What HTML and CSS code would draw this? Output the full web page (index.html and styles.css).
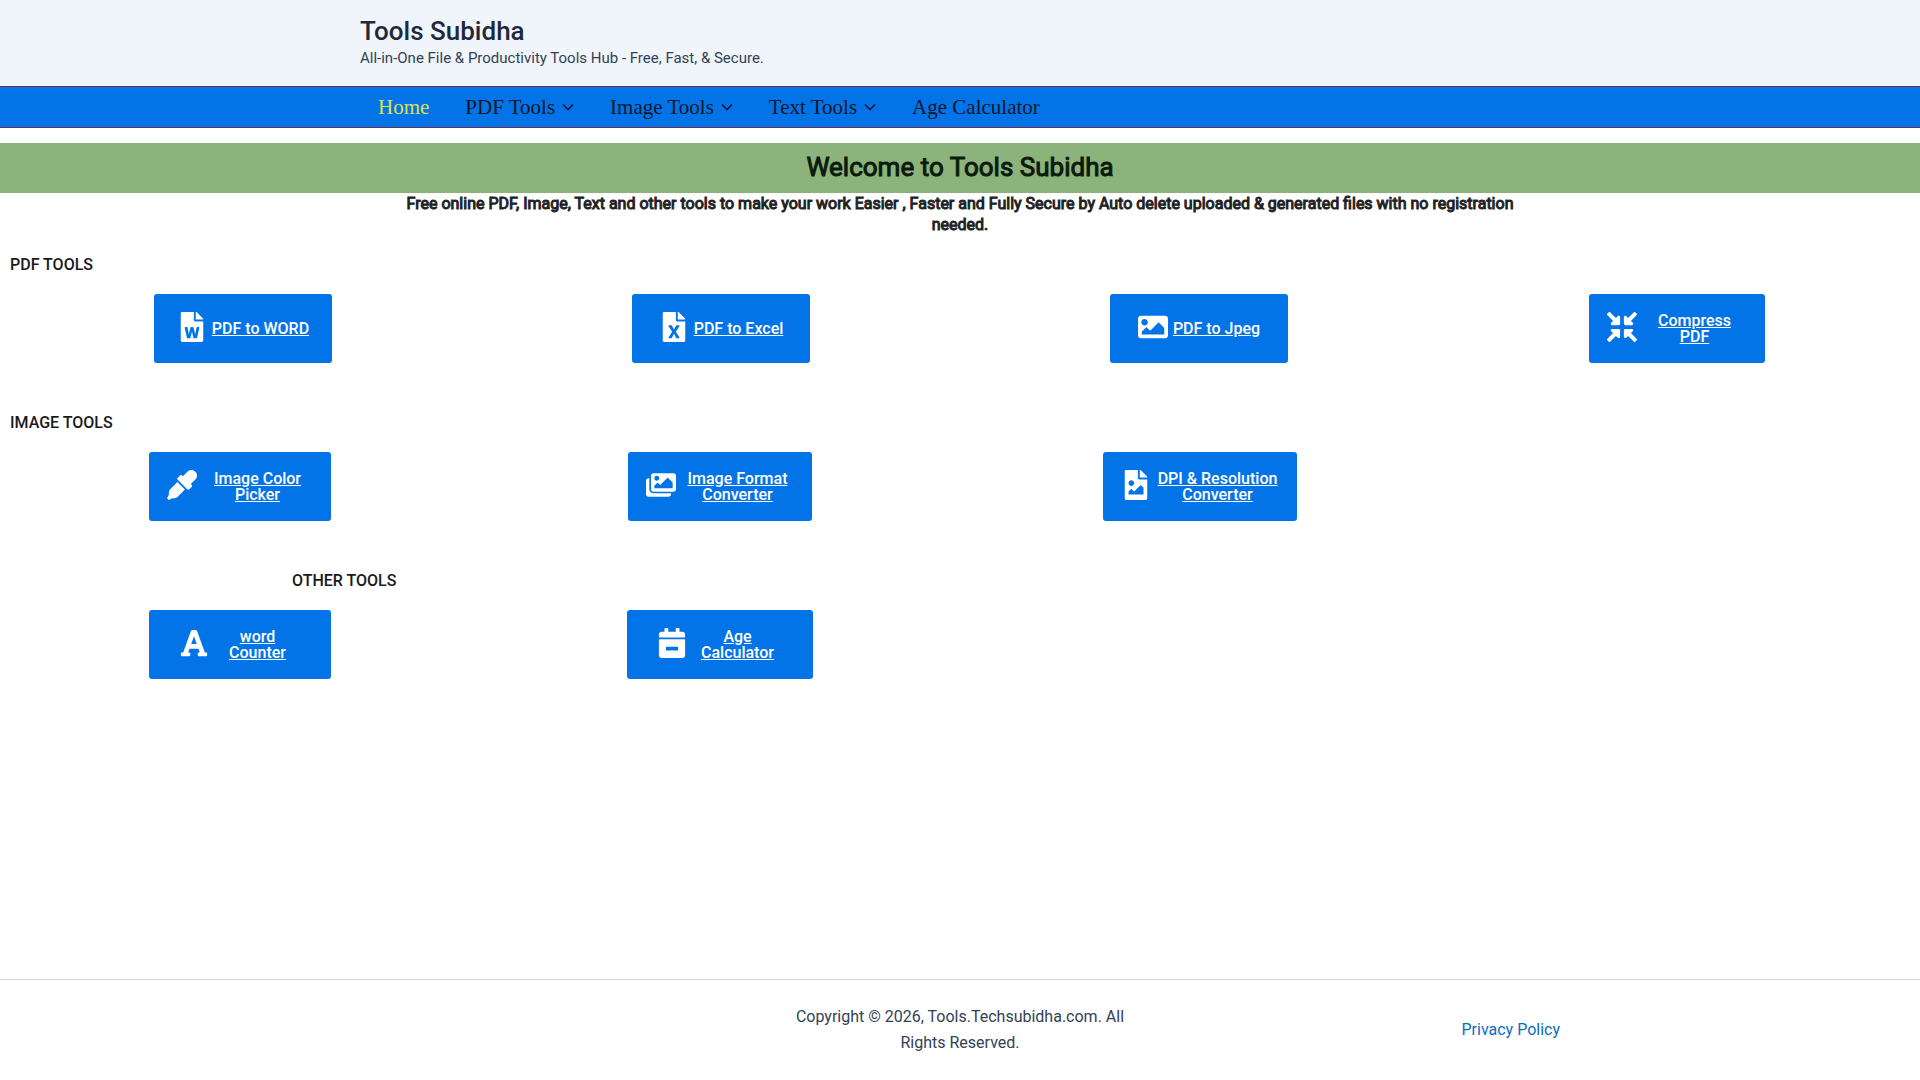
FILE: index.html
```html
<!DOCTYPE html>
<html lang="en">
<head>
  <meta charset="UTF-8" />
  <meta name="viewport" content="width=device-width, initial-scale=1.0" />
  <title>Tools Subidha</title>
  <link rel="stylesheet" href="styles.css">
</head>
<body>
  <header class="site-header">
    <div class="container">
      <a class="site-title" href="#">Tools Subidha</a>
      <p class="site-tagline">All-in-One File &amp; Productivity Tools Hub - Free, Fast, &amp; Secure.</p>
    </div>
  </header>
  <nav class="main-nav">
    <ul class="container menu">
      <li><a class="active" href="#">Home</a></li>
      <li><a href="#">PDF Tools <svg class="chevron" viewBox="0 0 12 12"><path d="M1 3.500 6 8.500l5-5"/></svg></a></li>
      <li><a href="#">Image Tools <svg class="chevron" viewBox="0 0 12 12"><path d="M1 3.500 6 8.500l5-5"/></svg></a></li>
      <li><a href="#">Text Tools <svg class="chevron" viewBox="0 0 12 12"><path d="M1 3.500 6 8.500l5-5"/></svg></a></li>
      <li><a href="#">Age Calculator</a></li>
    </ul>
  </nav>
  <main>
    <h1 class="welcome">Welcome to Tools Subidha</h1>
    <p class="intro">Free online PDF, Image, Text and other tools to make your work Easier , Faster and Fully Secure by Auto delete uploaded &amp; generated files with no registration needed.</p>

    <section class="tools">
      <h2>PDF TOOLS</h2>
      <div class="tool-row inset">
        <a class="tool-btn" href="#">
          <svg class="icon" viewBox="0 0 384 512"><path d="M224 136V0H24C10.700 0 0 10.700 0 24v464c0 13.300 10.700 24 24 24h336c13.300 0 24-10.700 24-24V160H248c-13.200 0-24-10.800-24-24zm57.100 120H305c7.700 0 13.400 7.100 11.700 14.700l-38 168c-1.200 5.500-6.100 9.300-11.700 9.300h-38c-5.500 0-10.300-3.800-11.600-9.100-25.800-103.500-20.800-81.200-25.600-110.500h-.5c-1.100 14.300-2.400 17.400-25.600 110.500-1.300 5.300-6.100 9.100-11.600 9.100H117c-5.600 0-10.500-3.900-11.700-9.400l-37.800-168c-1.700-7.500 4-14.600 11.700-14.600h24.500c5.700 0 10.700 4 11.800 9.700 15.600 78 20.100 109.500 21 122.200 1.600-10.200 7.300-32.700 29.400-122.700 1.300-5.400 6.100-9.100 11.700-9.100h29.100c5.600 0 10.400 3.800 11.700 9.200 24 100.400 28.800 124 29.600 129.400-.2-11.200-2.600-17.800 21.600-129.200 1-5.600 5.900-9.500 11.500-9.500zM384 121.900v6.100H256V0h6.100c6.400 0 12.500 2.500 17 7l97.900 98c4.500 4.500 7 10.600 7 16.900z"/></svg>
          <span>PDF to WORD</span>
        </a>
        <a class="tool-btn" href="#">
          <svg class="icon" viewBox="0 0 384 512"><path d="M224 136V0H24C10.700 0 0 10.700 0 24v464c0 13.300 10.700 24 24 24h336c13.300 0 24-10.700 24-24V160H248c-13.200 0-24-10.800-24-24zm60.100 106.500L224 336l60.100 93.500c5.100 8-.6 18.500-10.100 18.500h-34.900c-4.400 0-8.500-2.400-10.600-6.300C208.900 405.500 192 373 192 373c-6.400 14.800-10 20-36.600 68.800-2.100 3.900-6.100 6.300-10.500 6.300H110c-9.500 0-15.200-10.500-10.100-18.500l60.300-93.500-60.300-93.500c-5.200-8 .6-18.500 10.100-18.500h34.800c4.400 0 8.500 2.400 10.600 6.300 26.100 48.800 20 33.600 36.600 68.500 0 0 6.100-11.700 36.600-68.500 2.100-3.900 6.200-6.300 10.600-6.300H274c9.500-.1 15.200 10.400 10.100 18.400zM384 121.900v6.100H256V0h6.100c6.400 0 12.500 2.500 17 7l97.900 98c4.500 4.500 7 10.600 7 16.900z"/></svg>
          <span>PDF to Excel</span>
        </a>
        <a class="tool-btn" href="#">
          <svg class="icon" viewBox="0 0 512 512"><path d="M464 448H48c-26.510 0-48-21.490-48-48V112c0-26.510 21.490-48 48-48h416c26.510 0 48 21.490 48 48v288c0 26.510-21.490 48-48 48zM112 120c-30.928 0-56 25.072-56 56s25.072 56 56 56 56-25.072 56-56-25.072-56-56-56zM64 384h384V272l-87.515-87.515c-4.686-4.686-12.284-4.686-16.971 0L208 320l-55.515-55.515c-4.686-4.686-12.284-4.686-16.971 0L64 336v48z"/></svg>
          <span>PDF to Jpeg</span>
        </a>
        <a class="tool-btn compress" href="#">
          <svg class="icon" viewBox="0 0 512 512"><path d="M200 288H88c-21.400 0-32.100 25.800-17 41l32.900 31-99.200 99.300c-6.200 6.200-6.200 16.400 0 22.600l25.400 25.400c6.200 6.200 16.400 6.200 22.600 0L152 408l31.100 33c15.100 15.100 40.900 4.400 40.900-17V312c0-13.300-10.700-24-24-24zm112-64h112c21.400 0 32.100-25.900 17-41l-33-31 99.300-99.300c6.200-6.200 6.200-16.400 0-22.600L481.900 4.700c-6.200-6.200-16.400-6.200-22.600 0L360 104l-31.100-33C313.800 55.900 288 66.600 288 88v112c0 13.300 10.700 24 24 24zm96 136l33-31.100c15.100-15.100 4.400-40.900-17-40.900H312c-13.300 0-24 10.700-24 24v112c0 21.400 25.900 32.100 41 17l31-32.900 99.300 99.300c6.200 6.200 16.400 6.200 22.600 0l25.400-25.400c6.200-6.200 6.200-16.400 0-22.600L408 360zM183 71.100L152 104 52.700 4.700c-6.200-6.200-16.400-6.200-22.600 0L4.700 30.100c-6.200 6.200-6.200 16.400 0 22.600L104 152l-33 31.100C55.900 198.200 66.600 224 88 224h112c13.300 0 24-10.700 24-24V88c0-21.300-25.900-32-41-16.900z"/></svg>
          <span>Compress PDF</span>
        </a>
      </div>
    </section>

    <section class="tools">
      <h2>IMAGE TOOLS</h2>
      <div class="tool-row">
        <a class="tool-btn medium" href="#">
          <svg class="icon" viewBox="0 0 512 512"><path d="M50.750 333.250c-12 12-18.750 28.280-18.750 45.260V424L0 480l32 32 56-32h45.490c16.970 0 33.250-6.740 45.250-18.740l126.640-126.620-128-128L50.750 333.250zM483.880 28.120c-37.470-37.500-98.280-37.500-135.750 0l-77.090 77.090-13.100-13.100c-9.440-9.440-24.650-9.310-33.940 0l-40.970 40.970c-9.370 9.370-9.370 24.570 0 33.940l161.940 161.940c9.440 9.440 24.650 9.310 33.940 0L419.880 288c9.370-9.370 9.370-24.570 0-33.940l-13.100-13.100 77.090-77.090c37.510-37.480 37.510-98.260.01-135.750z"/></svg>
          <span>Image Color Picker</span>
        </a>
        <a class="tool-btn format" href="#">
          <svg class="icon" viewBox="0 0 576 512"><path d="M480 416v16c0 26.510-21.490 48-48 48H48c-26.510 0-48-21.490-48-48V176c0-26.510 21.490-48 48-48h16v208c0 44.112 35.888 80 80 80h336zm96-80V80c0-26.510-21.490-48-48-48H144c-26.510 0-48 21.490-48 48v256c0 26.510 21.490 48 48 48h384c26.510 0 48-21.490 48-48zM256 128c0 26.510-21.490 48-48 48s-48-21.490-48-48 21.490-48 48-48 48 21.490 48 48zm-96 144l55.515-55.515c4.686-4.686 12.284-4.686 16.971 0L272 256l135.515-135.515c4.686-4.686 12.284-4.686 16.971 0L512 208v112H160v-48z"/></svg>
          <span>Image Format Converter</span>
        </a>
        <a class="tool-btn wide" href="#">
          <svg class="icon" viewBox="0 0 384 512"><path d="M384 121.941V128H256V0h6.059a24 24 0 0 1 16.970 7.029l97.941 97.941a24.002 24.002 0 0 1 7.030 16.971zM248 160c-13.200 0-24-10.800-24-24V0H24C10.745 0 0 10.745 0 24v464c0 13.255 10.745 24 24 24h336c13.255 0 24-10.745 24-24V160H248zm-135.455 16c26.510 0 48 21.490 48 48s-21.490 48-48 48-48-21.490-48-48 21.491-48 48-48zm208 240h-256l.485-48.485L104.545 328c4.686-4.686 11.799-4.201 16.485.485L160.545 368 264.060 264.485c4.686-4.686 12.284-4.686 16.971 0L320.545 304v112z"/></svg>
          <span>DPI &amp; Resolution Converter</span>
        </a>
      </div>
    </section>

    <section class="tools">
      <h2 class="other-title">OTHER TOOLS</h2>
      <div class="tool-row">
        <a class="tool-btn medium narrow-text" href="#">
          <svg class="icon" viewBox="0 0 448 512"><path d="M432 416h-23.410L277.880 53.690A32 32 0 0 0 247.580 32h-47.160a32 32 0 0 0-30.300 21.690L39.410 416H16a16 16 0 0 0-16 16v32a16 16 0 0 0 16 16h128a16 16 0 0 0 16-16v-32a16 16 0 0 0-16-16h-19.580l23.300-64h152.560l23.300 64H304a16 16 0 0 0-16 16v32a16 16 0 0 0 16 16h128a16 16 0 0 0 16-16v-32a16 16 0 0 0-16-16zM176.850 272L224 142.510 271.150 272z"/></svg>
          <span>word Counter</span>
        </a>
        <a class="tool-btn calculator narrow-text" href="#">
          <svg class="icon" viewBox="0 0 448 512"><path d="M436 160H12c-6.600 0-12-5.400-12-12v-36c0-26.500 21.500-48 48-48h48V12c0-6.600 5.400-12 12-12h40c6.600 0 12 5.400 12 12v52h128V12c0-6.600 5.400-12 12-12h40c6.600 0 12 5.400 12 12v52h48c26.500 0 48 21.500 48 48v36c0 6.600-5.400 12-12 12zM12 192h424c6.600 0 12 5.400 12 12v260c0 26.500-21.500 48-48 48H48c-26.500 0-48-21.500-48-48V204c0-6.600 5.400-12 12-12zm304 192c6.600 0 12-5.400 12-12v-40c0-6.600-5.400-12-12-12H132c-6.600 0-12 5.400-12 12v40c0 6.600 5.400 12 12 12h184z"/></svg>
          <span>Age Calculator</span>
        </a>
      </div>
    </section>
  </main>
  <footer class="site-footer">
    <div class="container footer-grid">
      <p>Copyright © 2026, Tools.Techsubidha.com. All Rights Reserved.</p>
      <a href="#">Privacy Policy</a>
    </div>
  </footer>
</body>
</html>
```
FILE: styles.css
```css
* {
  box-sizing: border-box;
}
body {
  margin: 0;
  min-height: 100vh;
  display: flex;
  flex-direction: column;
  background: #fff;
  color: #334155;
  font-family: Roboto, sans-serif;
  font-size: 16px;
}
h1, h2, p, ul {
  margin: 0;
}
.container {
  width: 100%;
  max-width: 1200px;
  margin: 0 auto;
}
.site-header {
  background: #f0f5fc;
  padding: 16px 0;
}
.site-title {
  display: block;
  color: #1e293b;
  font-size: 26px;
  font-weight: 500;
  line-height: 30px;
  text-decoration: none;
}
.site-tagline {
  font-size: 15px;
  line-height: 24px;
}
.main-nav {
  background: #0274e8;
  border-top: 1px solid #6b2d55;
  border-bottom: 1px solid #6b2d55;
}
.menu {
  display: flex;
  padding: 0;
  list-style: none;
}
.menu a {
  display: flex;
  align-items: center;
  gap: 7px;
  padding: 0 18px;
  color: #0f172a;
  font-family: "Liberation Serif", serif;
  font-size: 21px;
  line-height: 40px;
  text-decoration: none;
}
.menu .active {
  color: #dfe04a;
}
.chevron {
  width: 12px;
  height: 12px;
  fill: none;
  stroke: currentColor;
  stroke-width: 1.6;
}
main {
  flex: 1;
  padding-top: 15px;
}
.welcome {
  padding-bottom: 2px;
  background: #8bb37b;
  color: #0c1a0c;
  font-size: 26px;
  font-weight: 400;
  line-height: 48px;
  text-align: center;
  -webkit-text-stroke: 1px currentColor;
}
.intro {
  max-width: 1140px;
  margin: 0 auto;
  color: #222;
  font-size: 16px;
  font-weight: 400;
  line-height: 21px;
  text-align: center;
  -webkit-text-stroke: 1px currentColor;
}
.tools {
  padding-top: 20px;
  margin-bottom: 30px;
}
.tools h2 {
  padding-left: 10px;
  color: #1a1a1a;
  font-size: 16px;
  font-weight: 500;
  line-height: 20px;
}
.tools .other-title {
  padding-left: 292px;
}
.tool-row {
  display: grid;
  grid-template-columns: repeat(4, 1fr);
  justify-items: center;
  margin-top: 19px;
}
.inset {
  padding: 0 4px;
}
.tool-btn {
  display: flex;
  align-items: center;
  justify-content: center;
  gap: 5px;
  width: 178px;
  height: 69px;
  padding: 0 18px 3px;
  border-radius: 3px;
  background: #0274e8;
  color: #fff;
  font-weight: 500;
  line-height: 16px;
  text-align: center;
}
.tool-btn span {
  padding-top: 3px;
}
.compress {
  width: 176px;
}
.medium {
  width: 182px;
}
.format {
  width: 184px;
}
.calculator {
  width: 186px;
}
.wide {
  width: 194px;
}
.narrow-text {
  padding: 0 30px 3px;
}
.icon {
  flex: none;
  width: 30px;
  height: 30px;
  fill: currentColor;
}
.site-footer {
  border-top: 1px solid #d3d3d3;
  padding: 24px 0;
}
.footer-grid {
  display: grid;
  grid-template-columns: repeat(3, 1fr);
  gap: 50px;
  align-items: center;
  line-height: 26px;
}
.footer-grid p {
  grid-column: 2;
  text-align: center;
}
.footer-grid a {
  color: #0b6cbf;
  text-align: right;
  text-decoration: none;
}
```
